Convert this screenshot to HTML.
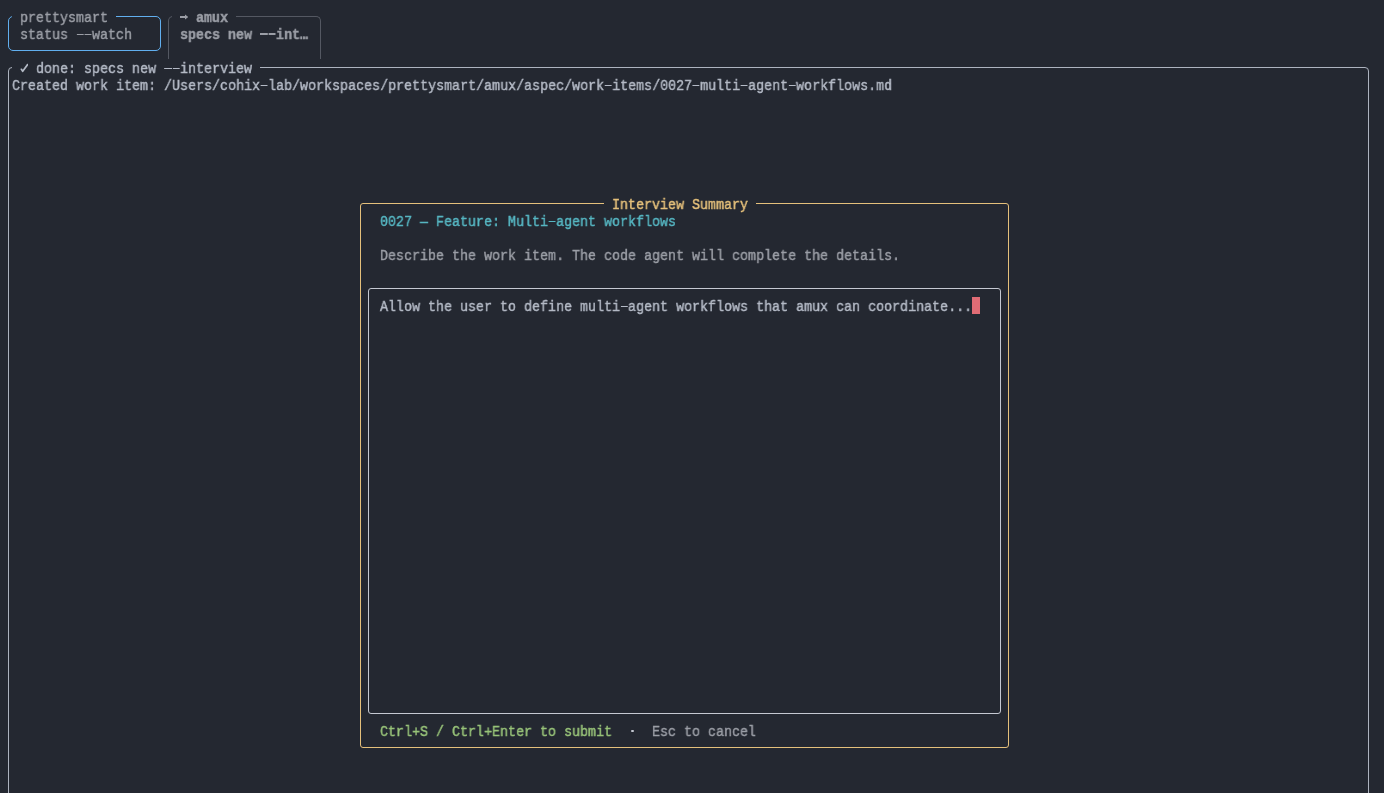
<!DOCTYPE html>
<html><head><meta charset="utf-8"><style>
html,body{margin:0;padding:0;}
body{width:1384px;height:793px;background:#242831;position:relative;overflow:hidden;font-family:"Liberation Mono",monospace;}
.t{position:absolute;white-space:pre;font-size:15.5px;line-height:17px;height:17px;transform-origin:0 0;transform:scaleX(0.86022);will-change:transform;-webkit-text-stroke:0.45px currentColor;}
.b{position:absolute;box-sizing:border-box;}
.h{display:inline-block;width:0.6em;height:0;position:relative;}
.h::after{content:"";position:absolute;left:0.03em;right:0.03em;bottom:4px;height:1.4px;background:currentColor;}
.bd .h::after{height:1.9px;}
</style></head><body>

<div class="b" style="left:8px;top:16px;width:153px;height:35px;border:1px solid #61afef;border-radius:5px;"></div>
<div class="b" style="left:168px;top:16px;width:153px;height:43px;border:1px solid #545862;border-bottom:none;border-radius:5px 5px 0 0;"></div>
<div class="b" style="left:8px;top:67px;width:1361px;height:970px;border:1px solid #adb3bf;border-radius:4px;"></div>
<div class="b" style="left:360px;top:203px;width:649px;height:545px;border:1px solid #e5c07b;border-radius:3px;"></div>
<div class="b" style="left:368px;top:288px;width:633px;height:426px;border:1px solid #c5c9d2;border-radius:3px;"></div>
<div class="b" style="left:12px;top:8px;width:104px;height:17px;background:#242831;"></div>
<div class="b" style="left:172px;top:8px;width:64px;height:17px;background:#242831;"></div>
<div class="b" style="left:12px;top:59px;width:248px;height:17px;background:#242831;"></div>
<div class="b" style="left:604px;top:195px;width:152px;height:17px;background:#242831;"></div>
<div class="t" style="left:20px;top:10.1px;color:#9b9ea6;">prettysmart</div>
<div class="t" style="left:20px;top:27.1px;color:#9b9ea6;">status <span class="h"></span><span class="h"></span>watch</div>
<div class="t bd" style="left:196px;top:10.1px;color:#9b9ea6;font-weight:bold;">amux</div>
<div class="t bd" style="left:180px;top:27.1px;color:#9b9ea6;font-weight:bold;">specs new <span class="h"></span><span class="h"></span>int…</div>
<div class="t" style="left:36px;top:61.1px;color:#b4bac6;">done: specs new <span class="h"></span><span class="h"></span>interview</div>
<div class="t" style="left:12px;top:78.1px;color:#b4bac6;">Created work item: /Users/cohix<span class="h"></span>lab/workspaces/prettysmart/amux/aspec/work<span class="h"></span>items/0027<span class="h"></span>multi<span class="h"></span>agent<span class="h"></span>workflows.md</div>
<div class="t" style="left:612px;top:197.1px;color:#e5c07b;">Interview Summary</div>
<div class="t" style="left:380px;top:214.1px;color:#56b6c2;">0027 — Feature: Multi<span class="h"></span>agent workflows</div>
<div class="t" style="left:380px;top:248.1px;color:#9b9ea6;">Describe the work item. The code agent will complete the details.</div>
<div class="t" style="left:380px;top:299.1px;color:#b4bac6;">Allow the user to define multi<span class="h"></span>agent workflows that amux can coordinate...</div>
<div class="t" style="left:380px;top:724.1px;color:#98c379;">Ctrl+S / Ctrl+Enter to submit</div>
<div class="t" style="left:652px;top:724.1px;color:#9b9ea6;">Esc to cancel</div>
<svg class="b" style="left:20px;top:59px" width="8" height="17" viewBox="0 0 8 17"><path d="M1.4 10.3 L2.7 12.3 L7.6 5.6" fill="none" stroke="#b4bac6" stroke-width="1.7" stroke-linecap="round" stroke-linejoin="round"/></svg>
<svg class="b" style="left:180px;top:8px" width="8" height="17" viewBox="0 0 8 17"><path d="M0 8.1 H5.5 V9.9 H0 Z M5 6.6 L8.4 9 L5 11.4 Z" fill="#9b9ea6"/></svg>
<div class="b" style="left:630.9px;top:729.5px;width:2.8px;height:2.8px;border-radius:50%;background:#c3c7d0;"></div>
<div class="b" style="left:972px;top:297px;width:8px;height:17px;background:#e06c75;"></div>
</body></html>
